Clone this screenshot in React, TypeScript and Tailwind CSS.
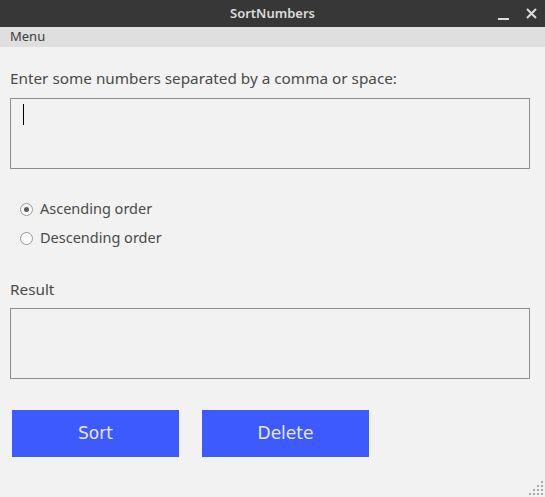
import React from "react";

export default function App() {
  const ui = { fontFamily: '"Noto Sans", "DejaVu Sans", sans-serif' };
  const dv = { fontFamily: '"DejaVu Sans", sans-serif' };
  return (
    <div className="w-[545px] h-[497px] bg-[#f2f2f2] flex flex-col relative overflow-hidden" style={ui}>
      <div className="h-[27px] bg-[#373737] flex items-center justify-center relative shrink-0">
        <span className="text-[13px] font-semibold text-[#dcdcdc]">SortNumbers</span>
        <div className="absolute right-0 top-0 h-[27px] flex items-center">
          <div className="w-[11px] h-[2px] bg-[#dcdcdc] mt-[10px] mr-[17px]" />
          <svg width="11" height="11" viewBox="0 0 11 11" className="mr-[8px]">
            <path d="M1 1 L10 10 M10 1 L1 10" stroke="#dcdcdc" strokeWidth="2" />
          </svg>
        </div>
      </div>
      <div className="h-[20px] bg-[#dfdfdf] flex items-center px-[10px] shrink-0">
        <span className="text-[13px] text-[#3c3c3c]">Menu</span>
      </div>
      <div className="flex flex-col px-[10px] pr-[15px]">
        <div className="mt-[19px] h-[24px] flex items-center text-[15.3px] text-[#4a4a4a]">
          Enter some numbers separated by a comma or space:
        </div>
        <div className="mt-[8px] h-[71px] border border-[#8e8e8e] relative">
          <div className="absolute left-[12px] top-[5px] w-[1px] h-[21px] bg-black" />
        </div>
        <div className="mt-[31px] flex flex-col gap-[11px] pl-[10px]">
          <label className="flex items-center gap-[7px] h-[18px] text-[14.5px] text-[#4a4a4a]">
            <span className="w-[13px] h-[13px] rounded-full border border-[#9a9a9a] bg-[#fafafa] flex items-center justify-center">
              <span className="w-[5px] h-[5px] rounded-full bg-[#5a5a5a]" />
            </span>
            Ascending order
          </label>
          <label className="flex items-center gap-[7px] h-[18px] text-[14.5px] text-[#4a4a4a]">
            <span className="w-[13px] h-[13px] rounded-full border border-[#9a9a9a] bg-[#fafafa]" />
            Descending order
          </label>
        </div>
        <div className="mt-[30px] h-[24px] flex items-center text-[15.3px] text-[#4a4a4a]">Result</div>
        <div className="mt-[7px] h-[71px] border border-[#8e8e8e]" />
        <div className="mt-[31px] flex gap-[23px] pl-[2px]">
          <button className="w-[167px] h-[47px] bg-[#3d5afe] text-[#e6e8f5] text-[17px]" style={dv}>Sort</button>
          <button className="w-[167px] h-[47px] bg-[#3d5afe] text-[#e6e8f5] text-[17px]" style={dv}>Delete</button>
        </div>
      </div>
      <svg className="absolute right-[2px] bottom-[2px]" width="14" height="14" viewBox="0 0 14 14">
        {[[12, 0], [12, 4], [8, 4], [12, 8], [8, 8], [4, 8], [12, 12], [8, 12], [4, 12], [0, 12]].map(([x, y], i) => (
          <rect key={i} x={x} y={y} width="2" height="2" fill="#a8a8a8" />
        ))}
      </svg>
    </div>
  );
}
